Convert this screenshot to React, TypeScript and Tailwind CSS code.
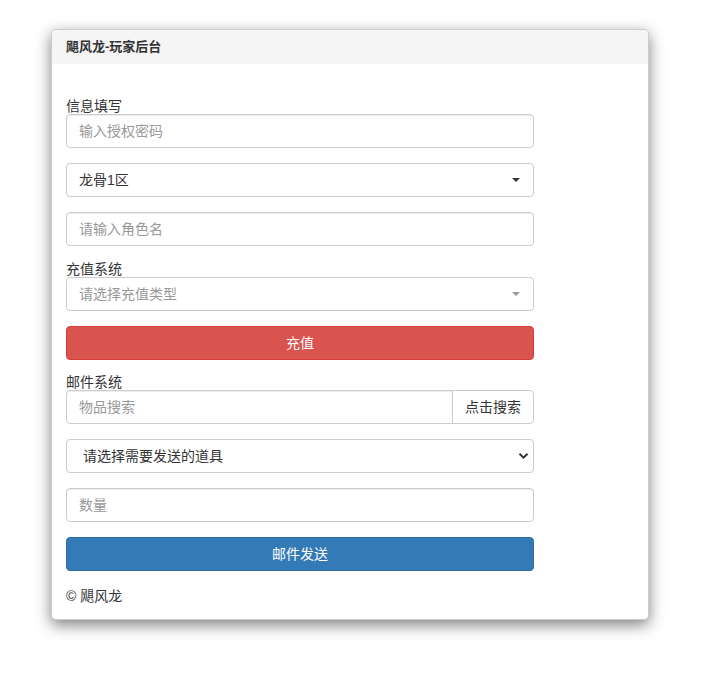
import { useState } from 'react';

const font = { fontFamily: '"Liberation Sans", "Noto Sans CJK SC", sans-serif' };

const inputCls =
  'block w-full h-[34px] px-3 text-[14px] text-[#555] bg-white border border-[#ccc] rounded-[4px] shadow-[inset_0_1px_1px_rgba(0,0,0,0.075)] outline-none placeholder:text-[#999]';

// select2-style fake dropdown
function FakeSelect({ text, placeholder, arrow }: { text: string; placeholder?: boolean; arrow: string }) {
  return (
    <div className="flex items-center justify-between w-full h-[34px] pl-3 pr-[13px] bg-white border border-[#ccc] rounded-[4px]">
      <span className={placeholder ? 'text-[#999]' : 'text-[#333]'}>{text}</span>
      <span className={`w-0 h-0 border-l-[4px] border-r-[4px] border-t-[4px] border-l-transparent border-r-transparent ${arrow}`} />
    </div>
  );
}

function Label({ children }: { children: string }) {
  return <div className="h-[16px] leading-[16px] text-[14px] text-[#333]">{children}</div>;
}

export default function App() {
  const [item, setItem] = useState('');

  return (
    <div className="w-[708px] h-[673px] bg-white pt-[29px] pl-[51px]" style={font}>
      <div className="w-[598px] h-[591px] bg-white border border-black/20 rounded-[5px] shadow-[0_5px_15px_rgba(0,0,0,0.5)] overflow-hidden">
        {/* Header */}
        <div className="h-[34px] bg-[#f5f5f5] px-[14px] flex items-center">
          <span className="text-[13px] font-bold text-[#333]">飓风龙-玩家后台</span>
        </div>

        {/* Body */}
        <div className="pt-[34px] px-[14px] text-[14px] text-[#333]">
          <div className="w-[468px] flex flex-col">
            <Label>信息填写</Label>
            <input className={inputCls} placeholder="输入授权密码" />

            <div className="mt-[15px]">
              <FakeSelect text="龙骨1区" arrow="border-t-[#333]" />
            </div>

            <input className={`${inputCls} mt-[15px]`} placeholder="请输入角色名" />

            <div className="mt-[15px]">
              <Label>充值系统</Label>
              <FakeSelect text="请选择充值类型" placeholder arrow="border-t-[#999]" />
            </div>

            <button className="mt-[15px] h-[34px] w-full rounded-[4px] bg-[#d9534f] border border-[#d43f3a] text-white text-[14px]">
              充值
            </button>

            <div className="mt-[14px]">
              <Label>邮件系统</Label>
              <div className="flex h-[34px]">
                <input
                  className="flex-1 min-w-0 h-[34px] px-3 text-[14px] text-[#555] bg-white border border-[#ccc] rounded-l-[4px] outline-none placeholder:text-[#999] shadow-[inset_0_1px_1px_rgba(0,0,0,0.075)]"
                  placeholder="物品搜索"
                />
                <button className="w-[82px] h-[34px] -ml-px bg-white border border-[#ccc] rounded-r-[4px] text-[#333] text-[14px]">
                  点击搜索
                </button>
              </div>
            </div>

            <div className="relative mt-[15px]">
              <select
                value={item}
                onChange={(e) => setItem(e.target.value)}
                className="appearance-none block w-full h-[34px] pl-[16px] pr-8 text-[14px] text-[#333] bg-white border border-[#ccc] rounded-[4px] outline-none"
                style={font}
              >
                <option value="">请选择需要发送的道具</option>
              </select>
              <svg
                className="absolute right-[5px] top-[13px] pointer-events-none"
                width="11"
                height="8"
                viewBox="0 0 11 8"
              >
                <path d="M1.5 1.8 L5.5 5.6 L9.5 1.8" fill="none" stroke="#333" strokeWidth="2" />
              </svg>
            </div>

            <input className={`${inputCls} mt-[15px]`} placeholder="数量" />

            <button className="mt-[15px] h-[34px] w-full rounded-[4px] bg-[#337ab7] border border-[#2e6da4] text-white text-[14px]">
              邮件发送
            </button>

            <div className="mt-[15px] h-[20px] leading-[20px] text-[#333]">© 飓风龙</div>
          </div>
        </div>
      </div>
    </div>
  );
}
